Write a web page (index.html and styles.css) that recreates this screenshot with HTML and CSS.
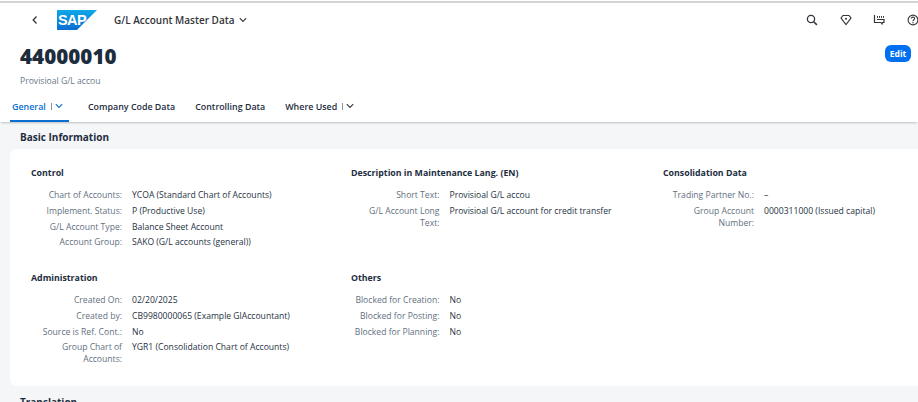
FILE: index.html
```html
<!DOCTYPE html>
<html lang="en">
<head>
<meta charset="utf-8">
<title>G/L Account Master Data</title>
<link rel="stylesheet" href="styles.css">
</head>
<body>
<div class="page">
  <header class="shell">
    <svg class="back" viewBox="0 0 8 10" width="8" height="10"><path d="M5.5 1.5 2.2 5l3.3 3.5" fill="none" stroke="#32363a" stroke-width="1.3"/></svg>
    <svg class="logo" viewBox="0 0 40 20" width="40" height="20">
      <defs><linearGradient id="sapg" x1="0" y1="0" x2="0" y2="1"><stop offset="0" stop-color="#0fa8e8"/><stop offset="1" stop-color="#0a6ed1"/></linearGradient></defs>
      <path d="M0 0h40L20 20H0z" fill="url(#sapg)"/>
      <text x="1" y="15" class="logo-text">SAP</text>
    </svg>
    <div class="app-title">G/L Account Master Data</div>
    <svg class="caret app-caret" viewBox="0 0 8 6" width="8" height="6"><path d="M.8 1.2 4 4.4l3.2-3.2" fill="none" stroke="#32363a" stroke-width="1.1"/></svg>
    <div class="shell-icons">
      <svg viewBox="0 0 12 12" width="12" height="12"><circle cx="5" cy="5" r="3.6" fill="none" stroke="#32363a" stroke-width="1.3"/><path d="m7.7 7.7 3.2 3.2" stroke="#32363a" stroke-width="1.5"/></svg>
      <svg viewBox="0 0 12 12" width="12" height="12"><path d="M1 4 3 1.5h6L11 4 6 10.5z" fill="none" stroke="#32363a" stroke-width="1.2"/><circle cx="6" cy="4.7" r="1" fill="#32363a"/></svg>
      <svg viewBox="0 0 12 12" width="12" height="12"><path d="M1.5 1v7.5h6.5l1 1.5 .5-1.5h1.5V5.5h-7" fill="none" stroke="#32363a" stroke-width="1.2"/><path d="M4.5 2v1.8M6.5 2v1.8M8.5 2v1.8M10.5 2v1.8" stroke="#32363a" stroke-width="1"/></svg>
      <svg viewBox="0 0 12 12" width="12" height="12"><circle cx="6" cy="6" r="4.9" fill="none" stroke="#32363a" stroke-width="1.1"/><path d="M4.4 4.6C4.4 2.6 7.6 2.6 7.6 4.5 7.6 5.8 6 5.8 6 7.2" fill="none" stroke="#32363a" stroke-width="1.1"/><circle cx="6" cy="8.8" r=".7" fill="#32363a"/></svg>
    </div>
  </header>
  <section class="title-area">
    <div>
      <h1 class="object-id">44000010</h1>
      <div class="object-sub">Provisioal G/L accou</div>
    </div>
    <button class="edit">Edit</button>
  </section>
  <nav class="tabs">
    <div class="tab active">General <span class="sep"></span><svg class="caret" viewBox="0 0 8 6" width="8" height="6"><path d="M.8 1.2 4 4.4l3.2-3.2" fill="none" stroke="#0a6ed1" stroke-width="1.1"/></svg></div>
    <div class="tab">Company Code Data</div>
    <div class="tab">Controlling Data</div>
    <div class="tab">Where Used <span class="sep"></span><svg class="caret" viewBox="0 0 8 6" width="8" height="6"><path d="M.8 1.2 4 4.4l3.2-3.2" fill="none" stroke="#32363a" stroke-width="1.1"/></svg></div>
  </nav>
  <main class="content">
    <h2 class="section-title">Basic Information</h2>
    <div class="card">
      <section class="group">
        <h3>Control</h3>
        <dl class="form form-1">
          <dt>Chart of Accounts:</dt><dd>YCOA (Standard Chart of Accounts)</dd>
          <dt>Implement. Status:</dt><dd>P (Productive Use)</dd>
          <dt>G/L Account Type:</dt><dd>Balance Sheet Account</dd>
          <dt>Account Group:</dt><dd>SAKO (G/L accounts (general))</dd>
        </dl>
      </section>
      <section class="group">
        <h3>Description in Maintenance Lang. (EN)</h3>
        <dl class="form form-2">
          <dt>Short Text:</dt><dd>Provisioal G/L accou</dd>
          <dt>G/L Account Long Text:</dt><dd>Provisioal G/L account for credit transfer</dd>
        </dl>
      </section>
      <section class="group">
        <h3>Consolidation Data</h3>
        <dl class="form form-3">
          <dt>Trading Partner No.:</dt><dd>–</dd>
          <dt>Group Account Number:</dt><dd>0000311000 (Issued capital)</dd>
        </dl>
      </section>
      <section class="group">
        <h3>Administration</h3>
        <dl class="form form-1">
          <dt>Created On:</dt><dd>02/20/2025</dd>
          <dt>Created by:</dt><dd>CB9980000065 (Example GlAccountant)</dd>
          <dt>Source is Ref. Cont.:</dt><dd>No</dd>
          <dt>Group Chart of Accounts:</dt><dd>YGR1 (Consolidation Chart of Accounts)</dd>
        </dl>
      </section>
      <section class="group">
        <h3>Others</h3>
        <dl class="form form-2">
          <dt>Blocked for Creation:</dt><dd>No</dd>
          <dt>Blocked for Posting:</dt><dd>No</dd>
          <dt>Blocked for Planning:</dt><dd>No</dd>
        </dl>
      </section>
    </div>
    <h2 class="section-title next">Translation</h2>
  </main>
</div>
</body>
</html>
```
FILE: styles.css
```css
* { box-sizing: border-box; }
html, body { margin: 0; height: 100%; overflow: hidden; }
body { background: #fff; font-family: "Open Sans", "Noto Sans", sans-serif; color: #32363a; font-size: 8.6px; }
.page { width: 918px; height: 402px; overflow: hidden; display: flex; flex-direction: column; border-top: 2px solid #d4d4d4; margin-top: 1px; }
.shell { display: flex; align-items: center; height: 34px; flex: none; }
.back { margin-left: 31px; }
.logo { margin-left: 18px; }
.logo-text { font: 700 14.5px "Liberation Sans", sans-serif; fill: #fff; letter-spacing: -.6px; }
.app-title { margin-left: 17px; font-size: 10px; font-weight: 600; color: #32363a; }
.app-caret { margin-left: 4px; }
.shell-icons { margin-left: auto; display: flex; gap: 21.5px; width: 112px; }
.shell-icons svg { flex: none; }
.title-area { display: flex; justify-content: space-between; align-items: flex-start; height: 59px; flex: none; padding: 6px 20px 0 20px; }
.object-id { margin: 0; font-size: 20.6px; line-height: 26px; font-weight: 800; color: #1d2d3e; }
.object-sub { margin-top: 6px; font-size: 8.6px; line-height: 12px; color: #6a7887; }
.edit { margin: 2px -13px 0 0; width: 26px; height: 17px; border: 0; border-radius: 6px; background: #0070f2; color: #fff; font: 700 8.5px "Open Sans", sans-serif; padding: 0; }
.tabs { display: flex; height: 26px; flex: none; padding-left: 10px; gap: 18px; background: #fff; box-shadow: 0 2px 2px -1px rgba(0,0,0,.22); position: relative; z-index: 1; }
.tab { display: flex; align-items: center; font-size: 8.9px; font-weight: 600; padding: 0 1px 4px; height: 26px; color: #1d2d3e; border-bottom: 2px solid transparent; white-space: nowrap; }
.tab.active { width: 59px; color: #0a6ed1; border-bottom-color: #0a6ed1; padding: 0 2px 4px; }
.sep { display: inline-block; width: 1px; height: 7px; background: #8396a8; margin: 0 3px 0 5px; }
.content { flex: 1; background: #f5f6f7; overflow: hidden; padding-top: 8px; }
.section-title { margin: 0 0 5px 20px; font-size: 10px; line-height: 14px; font-weight: 700; color: #1d2d3e; }
.section-title.next { margin-top: 9px; }
.card { margin-left: 10px; width: 930px; height: 237px; background: #fff; border-radius: 7px; display: grid; grid-template-columns: 320px 312px 270px; grid-template-rows: 105px 1fr; padding: 17px 0 0 21px; }
.group h3 { margin: 0 0 9px; font-size: 8.8px; line-height: 14px; font-weight: 700; color: #1d2d3e; }
.form { margin: 0; display: grid; column-gap: 10px; row-gap: 3.8px; line-height: 12px; }
.form-1 { grid-template-columns: 91px 1fr; }
.form-2 { grid-template-columns: 88.5px 1fr; }
.form-3 { grid-template-columns: 91px 1fr; }
.form dt { text-align: right; color: #5f6f80; }
.form dd { margin: 0; color: #26323f; }
```
